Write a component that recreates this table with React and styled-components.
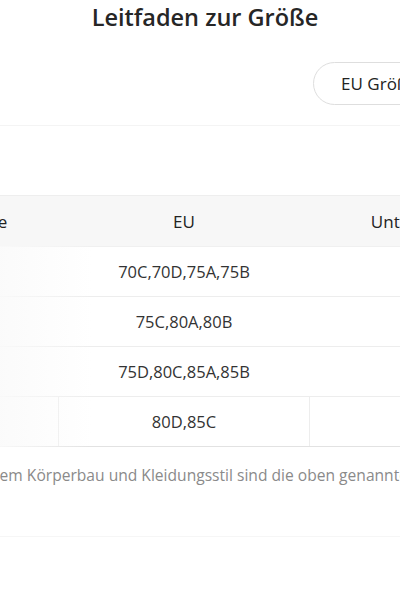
import styled, { createGlobalStyle } from 'styled-components';

const rows = [
  { eu: '70C,70D,75A,75B' },
  { eu: '75C,80A,80B' },
  { eu: '75D,80C,85A,85B' },
  { eu: '80D,85C' },
];

const App = () => {
  return (
    <Page>
      <GlobalStyle />
      <Title>Leitfaden zur Größe</Title>

      <Toolbar>
        <SizeButton>EU Größe</SizeButton>
      </Toolbar>

      <Divider />

      <TableWrap>
        <Table>
          <colgroup>
            <col style={{ width: 152 }} />
            <col style={{ width: 251 }} />
            <col style={{ width: 271 }} />
          </colgroup>
          <thead>
            <tr>
              <Th>Größe</Th>
              <Th>EU</Th>
              <Th>Unterbrustumfang</Th>
            </tr>
          </thead>
          <tbody>
            {rows.map((row, i) => (
              <tr key={row.eu}>
                <Td $last={i === rows.length - 1} />
                <Td $last={i === rows.length - 1}>{row.eu}</Td>
                <Td $last={i === rows.length - 1} />
              </tr>
            ))}
          </tbody>
        </Table>
        <Fade />
      </TableWrap>

      <Note>
        Je nach Ihrem Körperbau und Kleidungsstil sind die oben genannten Größen nur eine Referenz.
      </Note>

      <FaintLine />
    </Page>
  );
};

const GlobalStyle = createGlobalStyle`
  body {
    margin: 0;
    background: #fff;
    font-family: "Open Sans", "Noto Sans", sans-serif;
    overflow: hidden;
  }
`;

const Page = styled.div`
  width: 400px;
  height: 600px;
  overflow: hidden;
  background: #fff;
`;

const Title = styled.h1`
  margin: 0;
  padding: 1px 0 0 10px;
  text-align: center;
  font-size: 23.5px;
  font-weight: 600;
  line-height: 32px;
  color: #262626;
`;

const Toolbar = styled.div`
  display: flex;
  justify-content: flex-end;
  margin-top: 29px;
  margin-right: -45px;
`;

const SizeButton = styled.button`
  height: 43px;
  padding: 0 27px;
  border: 1px solid #dedede;
  border-radius: 22px;
  background: #fff;
  font-family: inherit;
  font-size: 17px;
  color: #222;
`;

const Divider = styled.div`
  height: 1px;
  margin-top: 20px;
  background: #f4f4f4;
`;

const TableWrap = styled.div`
  position: relative;
  margin-top: 69px;
  margin-left: -94px;
`;

const Table = styled.table`
  border-collapse: collapse;
  table-layout: fixed;
  width: 674px;
`;

const Th = styled.th`
  height: 50px;
  padding: 0;
  background: #f7f7f7;
  border-top: 1px solid #eeeeee;
  border-bottom: 1px solid #f0f0f0;
  font-size: 17px;
  font-weight: 400;
  color: #222;
  text-align: center;
  white-space: nowrap;
`;

const Td = styled.td`
  height: 49px;
  padding: 0;
  text-align: center;
  font-size: 16.5px;
  color: #333;
  border-bottom: 1px solid ${(p) => (p.$last ? '#e2e2e2' : '#ededed')};
  border-left: ${(p) => (p.$last ? '1px solid #ededed' : 'none')};
  border-right: ${(p) => (p.$last ? '1px solid #ededed' : 'none')};
`;

const Fade = styled.div`
  position: absolute;
  top: 51px;
  bottom: 0;
  left: 94px;
  width: 92px;
  background: linear-gradient(to right, rgba(250, 250, 250, 0.9), rgba(255, 255, 255, 0));
  pointer-events: none;
`;

const Note = styled.p`
  margin: 17px 0 0 -77px;
  font-size: 15.6px;
  line-height: 22px;
  color: #8a8a8a;
  white-space: nowrap;
`;

const FaintLine = styled.div`
  height: 1px;
  margin-top: 50px;
  background: #f6f6f6;
`;

export default App;
